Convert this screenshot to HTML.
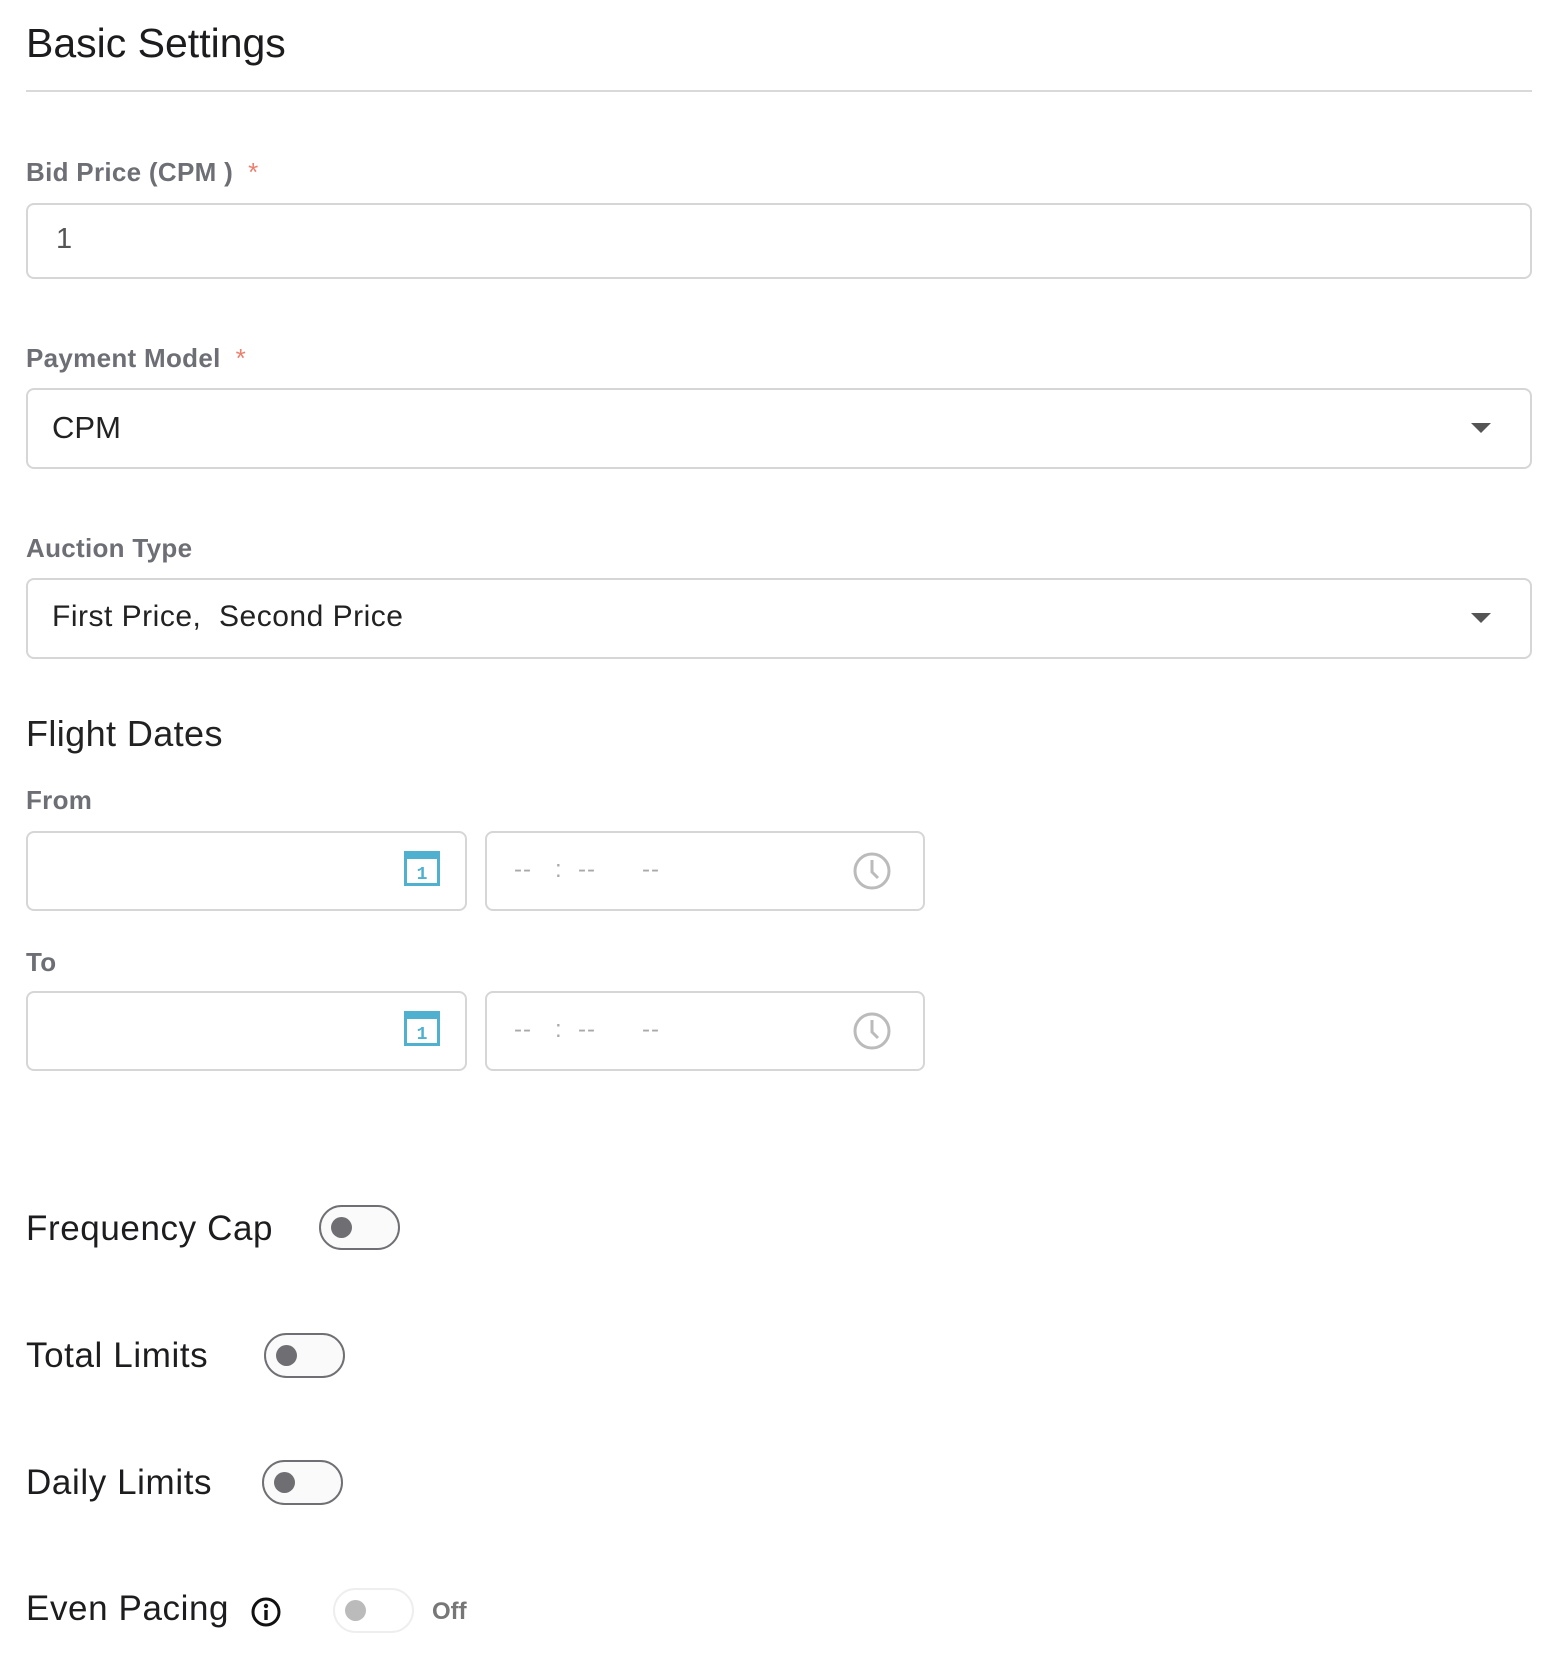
<!DOCTYPE html>
<html><head><style>
body{margin:0;width:1560px;height:1665px;background:#fff;font-family:"Liberation Sans",sans-serif;position:relative;overflow:hidden}
.a{position:absolute;white-space:nowrap}
.lbl{font-size:26px;color:#6d6f75;font-weight:bold;letter-spacing:0.3px}
.star{color:#e8816f;font-weight:normal}
.box{position:absolute;border:2px solid #d6d6d6;border-radius:8px;box-sizing:border-box;background:#fff}
.arrow{position:absolute;width:0;height:0;border-left:10px solid transparent;border-right:10px solid transparent;border-top:10px solid #555}
.big{font-size:35px;color:#1d1d1f;letter-spacing:0.6px}
.tg{position:absolute;width:81px;height:45px;border:2px solid #6f6f74;border-radius:23px;box-sizing:border-box;background:#fafafa}
.tg i{position:absolute;left:10px;top:10px;width:21px;height:21px;border-radius:50%;background:#6e6e73}
.tm{font-size:24px;color:#aaa;letter-spacing:1px}
</style></head><body>
<div class="a" style="left:26px;top:20px;font-size:41px;color:#1c1c1e">Basic Settings</div>
<div class="a" style="left:26px;top:90px;width:1506px;height:2px;background:#d9d9d9"></div>

<div class="a lbl" style="left:26px;top:157px">Bid Price (CPM ) <span class="star">&nbsp;*</span></div>
<div class="box" style="left:26px;top:203px;width:1506px;height:76px"></div>
<div class="a" style="left:56px;top:223px;font-size:29px;color:#555">1</div>

<div class="a lbl" style="left:26px;top:343px">Payment Model <span class="star">&nbsp;*</span></div>
<div class="box" style="left:26px;top:388px;width:1506px;height:81px"></div>
<div class="a" style="left:52px;top:410px;font-size:31px;color:#222">CPM</div>
<div class="arrow" style="left:1471px;top:423px"></div>

<div class="a lbl" style="left:26px;top:533px">Auction Type</div>
<div class="box" style="left:26px;top:578px;width:1506px;height:81px"></div>
<div class="a" style="left:52px;top:600px;font-size:30px;color:#222;letter-spacing:0.5px">First Price,&nbsp; Second Price</div>
<div class="arrow" style="left:1471px;top:613px"></div>

<div class="a" style="left:26px;top:713px;font-size:36px;color:#222;letter-spacing:0.4px">Flight Dates</div>
<div class="a lbl" style="left:26px;top:785px">From</div>
<div class="box" style="left:26px;top:831px;width:441px;height:80px"></div>
<div class="box" style="left:485px;top:831px;width:440px;height:80px"></div>
<div class="a lbl" style="left:26px;top:947px">To</div>
<div class="box" style="left:26px;top:991px;width:441px;height:80px"></div>
<div class="box" style="left:485px;top:991px;width:440px;height:80px"></div>

<!-- calendar icons -->
<svg class="a" style="left:404px;top:851px" width="36" height="35" viewBox="0 0 36 35"><rect x="0" y="0" width="36" height="35" fill="#4fb0cf"/><rect x="3" y="8" width="30" height="24" fill="#fff"/><text x="18" y="28" font-size="18" font-weight="bold" fill="#4fb0cf" text-anchor="middle" font-family="Liberation Mono">1</text></svg>
<svg class="a" style="left:404px;top:1011px" width="36" height="35" viewBox="0 0 36 35"><rect x="0" y="0" width="36" height="35" fill="#4fb0cf"/><rect x="3" y="8" width="30" height="24" fill="#fff"/><text x="18" y="28" font-size="18" font-weight="bold" fill="#4fb0cf" text-anchor="middle" font-family="Liberation Mono">1</text></svg>
<!-- clocks -->
<svg class="a" style="left:852px;top:851px" width="40" height="40" viewBox="0 0 40 40"><circle cx="20" cy="20" r="17" fill="none" stroke="#bbb" stroke-width="3"/><path d="M20 9V21L26 27" fill="none" stroke="#bbb" stroke-width="3"/></svg>
<svg class="a" style="left:852px;top:1011px" width="40" height="40" viewBox="0 0 40 40"><circle cx="20" cy="20" r="17" fill="none" stroke="#bbb" stroke-width="3"/><path d="M20 9V21L26 27" fill="none" stroke="#bbb" stroke-width="3"/></svg>
<div class="a tm" style="left:514px;top:856px">--&nbsp;&nbsp; :&nbsp; --&nbsp;&nbsp;&nbsp;&nbsp;&nbsp; --</div>
<div class="a tm" style="left:514px;top:1016px">--&nbsp;&nbsp; :&nbsp; --&nbsp;&nbsp;&nbsp;&nbsp;&nbsp; --</div>

<div class="a big" style="left:26px;top:1209px">Frequency Cap</div>
<div class="tg" style="left:319px;top:1205px"><i></i></div>
<div class="a big" style="left:26px;top:1336px">Total Limits</div>
<div class="tg" style="left:264px;top:1333px"><i></i></div>
<div class="a big" style="left:26px;top:1463px">Daily Limits</div>
<div class="tg" style="left:262px;top:1460px"><i></i></div>
<div class="a big" style="left:26px;top:1589px">Even Pacing</div>
<svg class="a" style="left:250px;top:1596px" width="32" height="32" viewBox="0 0 32 32"><circle cx="16" cy="16" r="13" fill="none" stroke="#111" stroke-width="3"/><circle cx="16" cy="10" r="2.2" fill="#111"/><rect x="14.3" y="14" width="3.4" height="10" fill="#111"/></svg>
<div class="tg" style="left:333px;top:1588px;border-color:#eee;background:#fff"><i style="background:#bbb"></i></div>
<div class="a" style="left:432px;top:1598px;font-size:24px;color:#777;font-weight:bold">Off</div>
</body></html>
